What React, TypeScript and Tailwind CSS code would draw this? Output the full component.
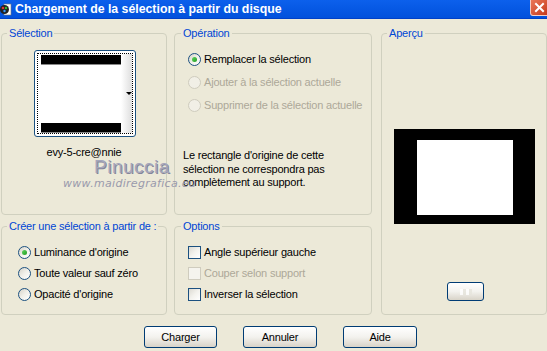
import React from "react"

const font = { fontFamily: '"Liberation Sans", Arial, sans-serif', letterSpacing: "-0.2px" }

function Radio({ checked, disabled }: { checked?: boolean; disabled?: boolean }) {
  return (
    <span
      className={
        "flex h-[13px] w-[13px] shrink-0 items-center justify-center rounded-full border " +
        (disabled
          ? "border-[#cfccbe] bg-[#f1efe6]"
          : "border-[#1c5180] bg-gradient-to-br from-[#d6d3c9] via-[#f1f0ea] to-white")
      }
    >
      {checked && (
        <span className="h-[5px] w-[5px] rounded-full bg-gradient-to-br from-[#5ed35e] to-[#1d9e1d]" />
      )}
    </span>
  )
}

function Check({ disabled }: { disabled?: boolean }) {
  return (
    <span
      className={
        "block h-[13px] w-[13px] shrink-0 border " +
        (disabled
          ? "border-[#cfccbe] bg-[#f5f4ee]"
          : "border-[#1c5180] bg-gradient-to-br from-[#dcdad2] via-[#f3f2ed] to-white")
      }
    />
  )
}

function Group({
  label,
  className,
  ml = "ml-[5px]",
  children,
}: {
  label: string
  className: string
  ml?: string
  children?: React.ReactNode
}) {
  return (
    <div className={"rounded-[4px] border border-[#d0d0bf] " + className}>
      <div className={"-mt-[7px] w-fit bg-[#ece9d8] px-[2px] text-[11px] leading-[13px] text-[#0046d5] " + ml}>
        {label}
      </div>
      {children}
    </div>
  )
}

function XpButton({ children, className }: { children?: React.ReactNode; className: string }) {
  return (
    <div
      className={
        "flex items-center justify-center rounded-[3px] border border-[#003c74] bg-gradient-to-b from-white via-[#f3f2ee] to-[#d8d3c8] text-[11px] text-black " +
        className
      }
    >
      {children}
    </div>
  )
}

export default function App() {
  return (
    <div className="relative h-[351px] w-[547px] overflow-hidden bg-[#ece9d8]" style={font}>
      {/* barre de titre */}
      <div className="flex h-[19px] items-center border-b border-[#0041c8] bg-gradient-to-b from-[#0c60ec] to-[#0251dc]">
        <svg width="12" height="13" viewBox="0 0 12 13" className="mr-[3px] shrink-0">
          <rect x="4" y="1" width="7" height="11" fill="#fff" stroke="#777" strokeWidth="0.6" />
          <circle cx="4.5" cy="6.5" r="4.5" fill="#222" />
          <circle cx="3" cy="5" r="1.3" fill="#d33" />
          <circle cx="6" cy="5" r="1.2" fill="#3b3" />
          <circle cx="4.5" cy="8" r="1.2" fill="#39f" />
        </svg>
        <span className="text-[12.3px] font-bold tracking-[0px] text-white">
          Chargement de la sélection à partir du disque
        </span>
        <div className="ml-auto flex h-[16px] w-[17px] self-start items-center justify-center rounded-bl-[3px] border-b border-l border-white/70 bg-gradient-to-br from-[#ea7656] to-[#c6391b]">
          <svg width="11" height="11" viewBox="0 0 11 11">
            <path d="M2 2 L9 9 M9 2 L2 9" stroke="#fff" strokeWidth="2" strokeLinecap="square" />
          </svg>
        </div>
      </div>

      <div className="flex flex-col pt-[14px]">
        <div className="flex pl-[1px]">
          {/* colonne gauche */}
          <div className="flex w-[166px] flex-col">
            <Group label="Sélection" className="h-[182px]">
              <div className="ml-[32px] mt-[10px] h-[87px] w-[102px] rounded-[3px] border border-[#1c5180] bg-white p-[2px]">
                <div className="flex h-full border border-dotted border-black">
                  <div className="flex w-[83px] flex-col justify-between py-[1px] pl-[3px]">
                    <div className="h-[9px] w-[80px] bg-black shadow-[0_1px_0_#888]" />
                    <div className="h-[9px] w-[80px] bg-black shadow-[0_1px_0_#888]" />
                  </div>
                  <div className="flex flex-1 items-center justify-end bg-gradient-to-r from-white to-[#dedede]">
                    <svg width="6" height="4" viewBox="0 0 6 4">
                      <path d="M0 0 H6 L3 3 Z" fill="#000" />
                    </svg>
                  </div>
                </div>
              </div>
              <div className="mt-[9px] text-center text-[11px] leading-[13px] text-black">evy-5-cre@nnie</div>
            </Group>
            <Group label="Créer une sélection à partir de :" className="mt-[11px] h-[89px]">
              <div className="mt-[9px] flex flex-col pl-[16px] text-[11px] text-black">
                <div className="flex h-[21px] items-center gap-[3px]">
                  <Radio checked />
                  <span>Luminance d'origine</span>
                </div>
                <div className="flex h-[21px] items-center gap-[3px]">
                  <Radio />
                  <span>Toute valeur sauf zéro</span>
                </div>
                <div className="flex h-[21px] items-center gap-[3px]">
                  <Radio />
                  <span>Opacité d'origine</span>
                </div>
              </div>
            </Group>
          </div>

          {/* colonne du milieu */}
          <div className="ml-[7px] flex w-[198px] flex-col">
            <Group label="Opération" ml="ml-[6px]" className="h-[182px]">
              <div className="mt-[8px] flex flex-col pl-[13px] text-[11px]">
                <div className="flex h-[23px] items-center gap-[3px] text-black">
                  <Radio checked />
                  <span>Remplacer la sélection</span>
                </div>
                <div className="flex h-[23px] items-center gap-[3px] text-[#aca899]">
                  <Radio disabled />
                  <span>Ajouter à la sélection actuelle</span>
                </div>
                <div className="flex h-[23px] items-center gap-[3px] text-[#aca899]">
                  <Radio disabled />
                  <span>Supprimer de la sélection actuelle</span>
                </div>
              </div>
              <div className="mt-[32px] pl-[8px] text-[11px] leading-[13.5px] text-black">
                Le rectangle d'origine de cette
                <br />
                sélection ne correspondra pas
                <br />
                complètement au support.
              </div>
            </Group>
            <Group label="Options" ml="ml-[6px]" className="mt-[11px] h-[89px]">
              <div className="mt-[9px] flex flex-col pl-[13px] text-[11px]">
                <div className="flex h-[21px] items-center gap-[3px] text-black">
                  <Check />
                  <span>Angle supérieur gauche</span>
                </div>
                <div className="flex h-[21px] items-center gap-[3px] text-[#aca899]">
                  <Check disabled />
                  <span>Couper selon support</span>
                </div>
                <div className="flex h-[21px] items-center gap-[3px] text-black">
                  <Check />
                  <span>Inverser la sélection</span>
                </div>
              </div>
            </Group>
          </div>

          {/* aperçu */}
          <Group label="Aperçu" className="ml-[9px] h-[282px] w-[166px]">
            <div className="ml-[12px] mt-[89px] h-[95px] w-[141px] bg-black pl-[23px] pt-[11px]">
              <div className="h-[75px] w-[96px] bg-white" />
            </div>
            <XpButton className="ml-[65px] mt-[58px] h-[19px] w-[37px]">
              <span className="h-[6px] w-[12px] bg-[repeating-linear-gradient(90deg,#ffffff_0_3px,#e6e4dc_3px_6px)] opacity-80" />
            </XpButton>
          </Group>
        </div>

        {/* boutons */}
        <div className="ml-[144px] mt-[11px] flex gap-[26px]">
          <XpButton className="h-[22px] w-[73px]">Charger</XpButton>
          <XpButton className="h-[22px] w-[74px]">Annuler</XpButton>
          <XpButton className="h-[22px] w-[74px]">Aide</XpButton>
        </div>
      </div>

      {/* filigrane */}
      <div className="pointer-events-none absolute left-[94px] top-[157px] text-[19px] leading-[19px] tracking-[0.5px] text-[#a5a6bb] [text-shadow:1px_1px_0_#84859a]">
        Pinuccia
      </div>
      <div
        className="pointer-events-none absolute left-[63px] top-[177px] text-[11px] italic leading-[13px] tracking-[0.3px] text-[#9a9aac]"
        style={{ fontFamily: '"DejaVu Sans", sans-serif' }}
      >
        www.maidiregrafica.eu
      </div>
    </div>
  )
}
